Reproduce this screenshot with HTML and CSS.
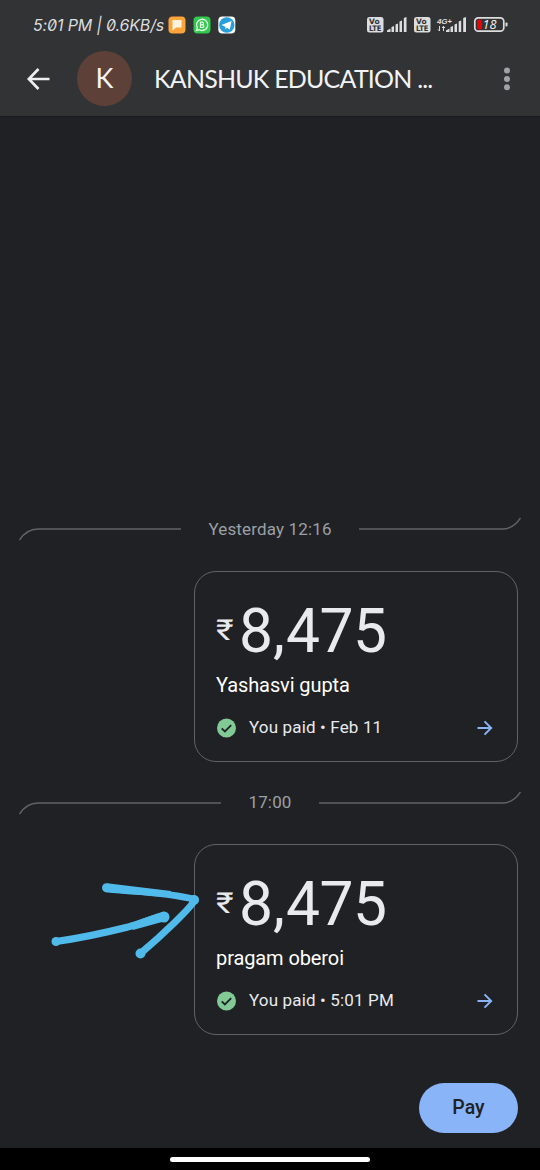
FILE: index.html
```html
<!DOCTYPE html>
<html lang="en">
<head>
<meta charset="utf-8">
<title>Payments</title>
<link rel="stylesheet" href="styles.css">
</head>
<body>
<div class="screen">
  <header class="top">
    <div class="status">
      <span class="clock">5:01 PM | 0.6KB/s</span>
      <svg class="apps" width="68" height="18" viewBox="0 0 68 18">
        <rect x="0.5" y="0.5" width="17" height="17" rx="4" fill="#fba43a"/>
        <path d="M4.500 4h9v7.500h-5.500l-3.500 3z" fill="#fff3e0"/>
        <rect x="25.500" y="0.500" width="17" height="17" rx="4" fill="#32c94f"/>
        <path d="M28.500 14.500l.8-2.800a5.600 5.600 0 1 1 2 2z" fill="none" stroke="#e9ffe9" stroke-width="1.300"/>
        <path d="M32.500 6.200h1.700a1.200 1.200 0 0 1 0 2.600h-1.700zM32.500 8.800h2a1.300 1.300 0 0 1 0 2.700h-2z" fill="none" stroke="#e9ffe9" stroke-width="1.200"/>
        <rect x="50.300" y="0.500" width="17" height="17" rx="4" fill="#fff"/>
        <circle cx="58.800" cy="9" r="7.700" fill="#279fda"/>
        <path d="M53.500 9l10-4-1.700 8.700-2.700-1.900-1.500 1.500-.3-2.600z" fill="#fff"/>
      </svg>
      <svg class="signals" width="142" height="18" viewBox="0 0 142 18">
        <g fill="#dcddde">
          <rect x="0" y="1" width="16.500" height="15.500" rx="2.500"/>
          <path d="M20 16v-1.500l3.500-2V16zM24.500 16v-5l2.500-1v6zM28.500 16V8.500l2.500-1V16zM32.500 16V5.500l2.500-1V16zM36.800 16V2l2.700-1v15z"/>
          <rect x="47" y="1" width="16.500" height="15.500" rx="2.500"/>
          <path d="M79 16v-1.500l3.500-2V16zM83.500 16v-5l2.500-1v6zM87.500 16V8.500l2.500-1V16zM91.700 16V5.500l2.500-1V16zM96.200 16V2l2.800-1v15z"/>
          <rect x="138.500" y="6.500" width="2" height="4" rx=".8"/>
        </g>
        <g class="volte"><text x="2" y="8">Vo</text><text x="2" y="15.300" textLength="12.500" lengthAdjust="spacingAndGlyphs">LTE</text><text x="49" y="8">Vo</text><text x="49" y="15.300" textLength="12.500" lengthAdjust="spacingAndGlyphs">LTE</text></g>
        <text class="net" x="70" y="8" textLength="15">4G+</text>
        <path d="M72.500 10v5M71 13.500l1.500 1.500M76.500 15v-5M75 12l1.500-1.700L78 12" fill="none" stroke="#dcddde"/>
        <rect x="107.800" y="1.800" width="29" height="13.400" rx="3.500" fill="none" stroke="#dcddde" stroke-width="1.700"/>
        <rect x="110" y="3.500" width="5" height="10" rx="2" fill="#e90000"/>
        <text class="pct" x="115.500" y="13" textLength="14" lengthAdjust="spacingAndGlyphs">18</text>
      </svg>
    </div>
    <div class="bar">
      <svg class="back" width="24" height="24" viewBox="0 0 24 24"><path d="M22.500 12H2.500M11.500 2L1.800 12l9.700 10" fill="none" stroke="#eeeff0" stroke-width="2.700"/></svg>
      <div class="avatar">K</div>
      <h1 class="title">KANSHUK EDUCATION ...</h1>
      <svg class="more" width="8" height="26" viewBox="0 0 8 26"><g fill="#9fa2a6"><circle cx="4" cy="4.500" r="3"/><circle cx="4" cy="13" r="3"/><circle cx="4" cy="21.300" r="3"/></g></svg>
    </div>
  </header>

  <main class="thread">
    <div class="divider">
      <svg width="162" height="26" viewBox="0 0 162 26"><path d="M.5 24C5 17 10.500 13 19 13H162"/></svg>
      <span class="day">Yesterday 12:16</span>
      <svg width="162" height="26" viewBox="0 0 162 26"><path d="M0 13H143C151.500 13 157 9 161.500 2"/></svg>
    </div>
    <section class="card">
      <div class="amount"><span class="rupee">₹</span><span class="num">8<span class="comma">,</span>475</span></div>
      <div class="note">Yashasvi gupta</div>
      <div class="state">
        <svg width="20" height="20" viewBox="0 0 20 20"><circle cx="10.500" cy="10" r="9.500" fill="#81c995"/><path d="M5.700 10.300l3.200 3.200 6.300-6.300" fill="none" stroke="#202124" stroke-width="1.800"/></svg>
        <span class="paid">You paid • Feb 11</span>
        <svg class="go" width="16" height="16" viewBox="0 0 16 16"><path d="M.5 8H14M7.500 1.300L14.200 8l-6.700 6.700" fill="none" stroke="#8ab4f8" stroke-width="1.900"/></svg>
      </div>
    </section>
    <div class="divider second">
      <svg width="202" height="26" viewBox="0 0 202 26"><path d="M.5 24C5 17 10.500 13 19 13H202"/></svg>
      <span class="day hour">17:00</span>
      <svg width="202" height="26" viewBox="0 0 202 26"><path d="M0 13H183C191.500 13 197 9 201.500 2"/></svg>
    </div>
    <section class="card">
      <div class="amount"><span class="rupee">₹</span><span class="num">8<span class="comma">,</span>475</span></div>
      <div class="note lower">pragam oberoi</div>
      <div class="state">
        <svg width="20" height="20" viewBox="0 0 20 20"><circle cx="10.500" cy="10" r="9.500" fill="#81c995"/><path d="M5.700 10.300l3.200 3.200 6.300-6.300" fill="none" stroke="#202124" stroke-width="1.800"/></svg>
        <span class="paid">You paid • 5:01 PM</span>
        <svg class="go" width="16" height="16" viewBox="0 0 16 16"><path d="M.5 8H14M7.500 1.300L14.200 8l-6.700 6.700" fill="none" stroke="#8ab4f8" stroke-width="1.900"/></svg>
      </div>
      <svg class="scribble" width="160" height="90" viewBox="0 0 160 90">
        <g fill="none" stroke="#50baea" stroke-width="7" stroke-linecap="round" stroke-linejoin="round">
          <path d="M5 58.500C27 55.500 57 49 77 44C91 40 101 35.500 112 33"/>
          <path d="M57 5.500C80 8 120 10 144 16.500C141 24 110 53 90 70"/>
        </g>
        <g fill="#50baea">
          <circle cx="5" cy="58.500" r="4.500"/><circle cx="113" cy="34" r="5.500"/><circle cx="55.500" cy="4.700" r="4.500"/><circle cx="89.500" cy="70.500" r="5"/><circle cx="143" cy="17" r="5"/>
          <path d="M55 9.200C72 11 95 12.500 120 14L120 8L56 .3ZM113 28.500C103 31 92 36 80 40L82 47L111 39Z"/>
        </g>
      </svg>
    </section>
    <button class="pay">Pay</button>
  </main>
  <footer class="nav"><span class="pill"></span></footer>
</div>
</body>
</html>
```

FILE: styles.css
```css
* { box-sizing: border-box; }
body { margin: 0; background: #202124; }
.screen { width: 540px; height: 1170px; display: flex; flex-direction: column; background: #202124; font-family: Roboto, sans-serif; overflow: hidden; }
svg { display: block; flex: none; }

.top { height: 117px; background: #323335; border-bottom: 1px solid #1b1a20; }
.status { height: 50px; padding: 0 31px 1px 33px; display: flex; align-items: center; }
.clock { width: 135px; padding-top: 1px; font: italic 16px/20px Inter, sans-serif; font-feature-settings: "zero"; letter-spacing: -.15px; color: #dcddde; white-space: nowrap; }
.apps { margin-left: 0; }
.signals { margin-left: auto; }
.volte { font: bold 7.500px "DejaVu Sans", sans-serif; fill: #323335; }
.net { font: italic bold 8px "Liberation Sans", sans-serif; fill: #dcddde; }
.pct { font: italic 12px "Open Sans", sans-serif; fill: #f2f2f2; }

.bar { height: 57px; padding: 0 29px 0 27px; display: flex; align-items: center; }
.avatar { width: 55px; height: 55px; margin-left: 26px; border-radius: 50%; background: #5d4037; color: #f5f3f2; font: 27px/54px Lato, sans-serif; text-align: center; }
.title { margin: -2px 0 0 22px; font: 400 25px/32px Lato, sans-serif; letter-spacing: -.8px; color: #f1f2f3; white-space: nowrap; }
.more { margin-left: auto; }

.thread { flex: 1; padding: 399px 22px 0 19px; display: flex; flex-direction: column; }
.divider { width: 502px; height: 26px; display: flex; justify-content: space-between; align-items: center; fill: none; stroke: #5f6368; stroke-width: 1.400; }
.divider.second { margin-top: 28px; }
.day { font-size: 17px; line-height: 26px; letter-spacing: .15px; color: #9aa0a6; }
.hour { margin-top: -1px; }
.card { position: relative; width: 324px; height: 190.500px; margin: 29px 0 0 175px; padding: 25px 24px 0 21px; border: 1.300px solid #5f6368; border-radius: 22px; }
.divider.second + .card { margin-top: 28.500px; }
.amount { height: 70px; display: flex; }
.rupee { width: 23px; font-size: 29px; line-height: 67px; color: #e8eaed; transform: scaleX(1.17); transform-origin: left; }
.num { font: 60.500px/70px Roboto, sans-serif; letter-spacing: -.5px; color: #e8eaed; }
.comma { margin: 0 1.500px 0 .5px; }
.note { margin-top: 5px; font-size: 20px; line-height: 26px; letter-spacing: -.1px; color: #fff; }
.state { margin-top: 17px; height: 26px; display: flex; align-items: center; }
.paid { margin: -2px 0 0 13px; font-size: 17px; line-height: 24px; letter-spacing: .15px; color: #e8eaed; }
.go { margin-left: auto; }
.scribble { position: absolute; left: -144px; top: 38px; overflow: visible; }
.pay { width: 99px; height: 50px; margin: 48px 0 0 auto; padding: 0; border: 0; border-radius: 25px; background: #8ab4f8; color: #202124; font: 500 19.500px/49px Roboto, sans-serif; }
.nav { height: 22px; background: #000; display: flex; justify-content: center; align-items: center; }
.pill { width: 200px; height: 5px; border-radius: 3px; background: #fff; }
```
